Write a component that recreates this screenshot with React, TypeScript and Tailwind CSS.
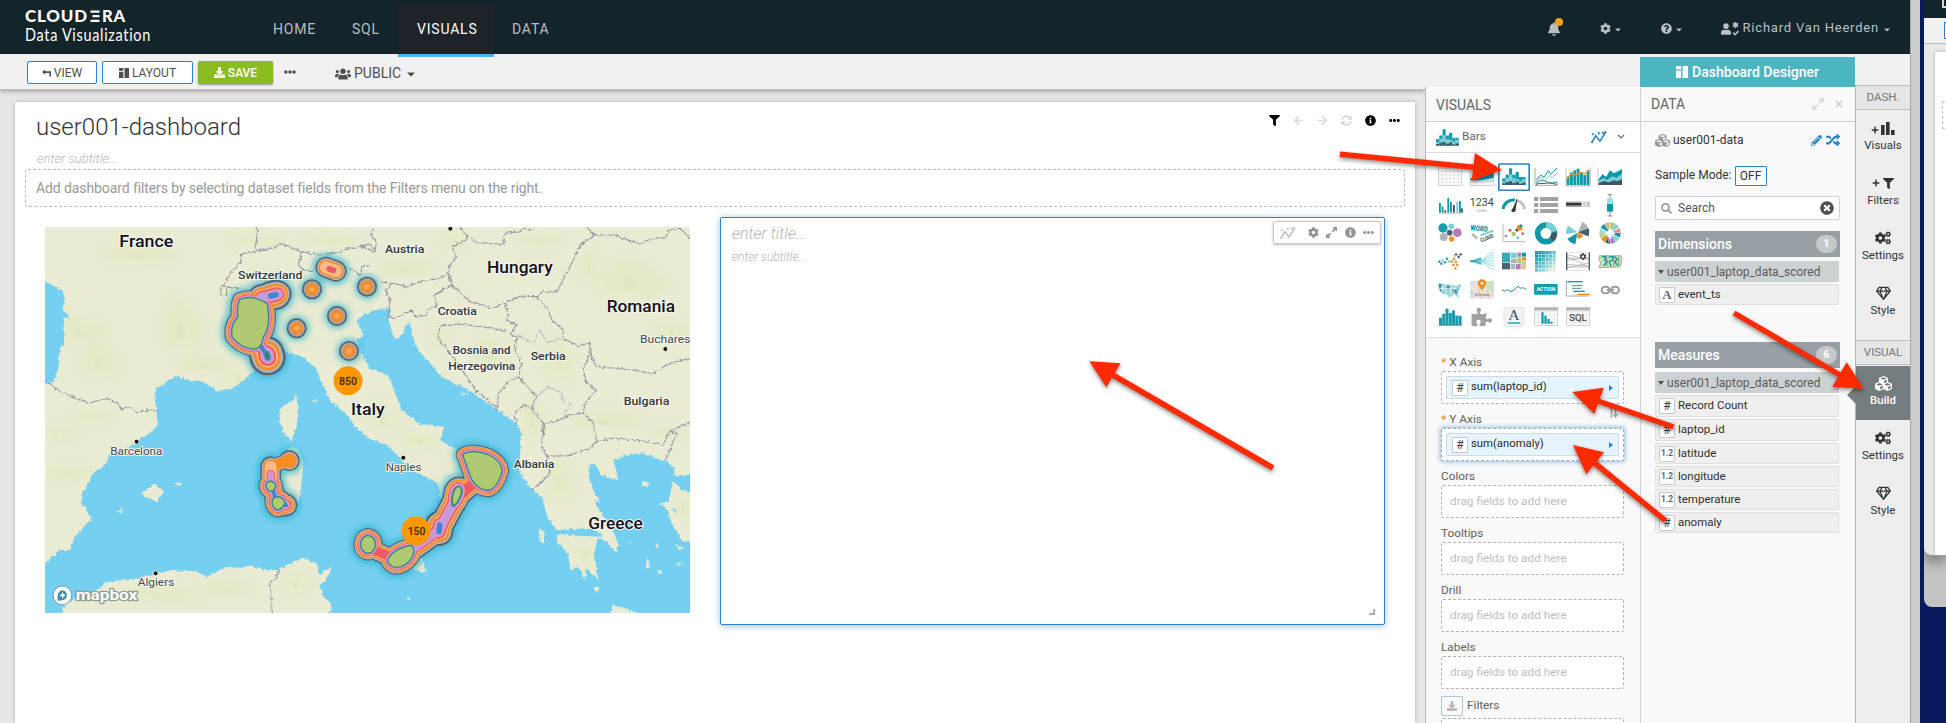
import React from "react";
import {
  FaArrowLeft,
  FaArrowRight,
  FaBell,
  FaCaretDown,
  FaCog,
  FaCogs,
  FaCubes,
  FaDownload,
  FaEllipsisH,
  FaFilter,
  FaInfoCircle,
  FaPencilAlt,
  FaPlus,
  FaPuzzlePiece,
  FaQuestionCircle,
  FaRandom,
  FaRegGem,
  FaSearch,
  FaSyncAlt,
  FaTimes,
  FaTimesCircle,
  FaUser,
  FaUsers,
} from "react-icons/fa";

const TEAL = "#0e98a8";
const LIGHT = "#7ccfda";
const SLATE = "#3f5663";
const GRAY = "#a3a3a3";

/* ---------- small icons ---------- */

function LayoutIcon({ className }: { className: string }) {
  return (
    <svg viewBox="0 0 12 12" className={className} fill="currentColor">
      <rect x="0" y="0" width="5.2" height="3.4" />
      <rect x="0" y="4.6" width="5.2" height="7.4" />
      <rect x="6.6" y="0" width="5.4" height="12" />
    </svg>
  );
}

function BackIcon() {
  return (
    <svg viewBox="0 0 10 8" className="h-2 w-[9px]" fill="currentColor">
      <path d="M3.6 0 0 3l3.6 3V4h4.6v3.8H10V2.1H3.6z" />
    </svg>
  );
}

function ExpandIcon({ className }: { className: string }) {
  return (
    <svg viewBox="0 0 14 14" className={className} fill="currentColor">
      <path d="M8.3 0H14v5.7L12 3.8 9 6.7 7.2 5l3-2.9zM5.7 14H0V8.3l2 1.9 3-2.9L6.8 9l-3 2.900z" />
    </svg>
  );
}

function TrendIcon({ className }: { className: string }) {
  return (
    <svg viewBox="0 0 50 42" className={className} fill="none" stroke="currentColor" strokeWidth="4">
      <path d="M3 37 15 17l13 17L45 7" strokeWidth="5" />
      <path d="M2 12h8M6 8v8M20 9h9M24.500 4v10M33 8h8M37 4v8" strokeWidth="3" />
      <circle cx="45" cy="6" r="3.500" fill="currentColor" stroke="none" />
      <circle cx="3.500" cy="37" r="3.500" fill="currentColor" stroke="none" />
    </svg>
  );
}

function StackedBars() {
  const top = [31, 20, 1, 20, 12, 27, 27];
  const mid = [40, 30, 19, 31, 33, 38, 33];
  const low = [46, 42, 40, 45, 41, 47, 44];
  return (
    <g>
      {top.map((t, i) => (
        <g key={i}>
          <rect x={i * 10} y={t} width="9.500" height={51 - t} fill={TEAL} />
          <rect x={i * 10} y={mid[i]} width="9.500" height={51 - mid[i]} fill={LIGHT} />
          <rect x={i * 10} y={low[i]} width="9.500" height={51 - low[i]} fill={SLATE} />
        </g>
      ))}
    </g>
  );
}

function GridLines({ h, head }: { h: number; head?: boolean }) {
  return (
    <g fill="none" stroke="#d9d9d9" strokeWidth="2">
      <rect x="14" y="15" width="69" height={h} fill="#fff" stroke="#bdbdbd" />
      {[25, 37, 48, 60, 72].map((x) => (
        <path key={x} d={`M${x} 15v${h}`} />
      ))}
      {[25, 36, 47, 58].map((y) => (
        <path key={y} d={`M14 ${y}h69`} />
      ))}
      {head && <rect x="13" y="13" width="71" height="9" fill="#b3b3b3" stroke="none" />}
    </g>
  );
}

function Cell({ children }: { children?: React.ReactNode }) {
  return (
    <svg viewBox="0 0 96 84" className="h-7 w-8">
      {children}
    </svg>
  );
}

function polar(cx: number, cy: number, r: number, deg: number) {
  const a = (deg * Math.PI) / 180;
  return `${(cx + r * Math.cos(a)).toFixed(1)} ${(cy + r * Math.sin(a)).toFixed(1)}`;
}

function wedge(cx: number, cy: number, r: number, a: number, b: number) {
  return `M${cx} ${cy}L${polar(cx, cy, r, a)}A${r} ${r} 0 ${b - a > 180 ? 1 : 0} 1 ${polar(cx, cy, r, b)}z`;
}

function VisualTypes() {
  const chord = ["#0e98a8", "#7ccfda", "#b57bbd", "#3f5663", "#f08a1d", "#a9c86f", "#9ed8e0", "#0e98a8", "#e2b36b", "#a9c86f", "#7ccfda", "#e58a85"];
  const heat = ["#0e98a8", "#2fa8b5", "#5fbfc9", "#8fd3d9", "#b8e4dd", "#dcefd5"];
  return (
    <div className="grid grid-cols-[repeat(6,32px)] pt-[10px] pl-2">
      <Cell>
        <GridLines h={53} />
      </Cell>
      <Cell>
        <GridLines h={53} />
        <path d="M14 45c15-2 20 3 35-3s20-6 34-14v18c-15 0-30 8-69 6z" fill={TEAL} />
        <rect x="14" y="50" width="69" height="6" fill={LIGHT} opacity=".6" />
      </Cell>
      <Cell>
        <rect x="2.500" y="3" width="91" height="79" rx="2" fill="#fff" stroke="#2a83c5" strokeWidth="5" />
        <g transform="translate(13 15)">
          <StackedBars />
        </g>
      </Cell>
      <Cell>
        <path d="M15 15v52h68" fill="none" stroke="#a9a9a9" strokeWidth="3" />
        <g fill="none" strokeWidth="3">
          <path d="M18 52 32 36l10 7 13-20 8 11 18-19" stroke={TEAL} />
          <path d="M18 58 30 44l14 8 14-15 9 7 15-15" stroke={LIGHT} />
          <path d="M18 61c14-12 24-9 35-3s18-1 30-1" stroke={TEAL} />
          <path d="M18 64c14-6 24 0 34-4s20 6 31 3" stroke={SLATE} />
        </g>
      </Cell>
      <Cell>
        {[41, 28, 22, 17, 30, 36, 22].map((t, i) => (
          <rect key={i} x={14 + i * 10} y={t} width="8.500" height={67 - t} fill={TEAL} />
        ))}
        <path d="M12 15v54h73V15" fill="none" stroke="#b9b9b9" strokeWidth="2.500" />
        <path d="M14 47 30 30l12 6 12-9 14 5 15-11" fill="none" stroke="#f5922a" strokeWidth="4" />
      </Cell>
      <Cell>
        <path d="M13 62V50l13-17 10 9 12-20 12 9 12-6 12-7v44z" fill={TEAL} />
        <path d="M13 62V54l15-9 12 6 14-11 14 4 16-12v30z" fill={LIGHT} />
        <path d="M13 66v-5l17-7 15 4 14-6 12 3 13-7v18z" fill={SLATE} />
        <path d="M12 15v54" stroke="#bbb" strokeWidth="2.500" />
      </Cell>

      <Cell>
        {[
          [15, 36, TEAL],
          [23, 46, TEAL],
          [31, 58, SLATE],
          [40, 21, TEAL],
          [48, 32, TEAL],
          [57, 42, SLATE],
          [67, 32, LIGHT],
          [75, 30, TEAL],
          [81, 52, SLATE],
        ].map(([x, y, c], i) => (
          <rect key={i} x={x} y={y} width="5.500" height={65 - Number(y)} fill={String(c)} />
        ))}
        <path d="M14 67h70" stroke="#aaa" strokeWidth="2" />
      </Cell>
      <Cell>
        <text x="11" y="44" fontSize="31" textLength="72" lengthAdjust="spacingAndGlyphs" fill="#444">
          1234
        </text>
        <text x="30" y="64" fontSize="12" textLength="36" fill="#aaa">
          LABEL
        </text>
      </Cell>
      <Cell>
        <path d="M15 54a32 32 0 0 1 36-27" fill="none" stroke={TEAL} strokeWidth="9" />
        <path d="M57 29a32 32 0 0 1 23 26" fill="none" stroke="#c4c4c4" strokeWidth="9" />
        <path d="M43 58 57 25l-6 35z" fill="#333" stroke="#333" strokeWidth="2" />
        <circle cx="46" cy="58" r="5.500" fill="#333" />
      </Cell>
      <Cell>
        {[18, 36, 54].map((y) => (
          <g key={y} fill={GRAY}>
            <rect x="12" y={y} width="13" height="12" />
            <rect x="30" y={y} width="54" height="12" />
          </g>
        ))}
      </Cell>
      <Cell>
        <rect x="12" y="32" width="72" height="16" fill="#c9c9c9" />
        <rect x="12" y="32" width="44" height="16" fill="#a5a5a5" />
        <rect x="12" y="36" width="46" height="7" fill="#333" />
        <path d="M62 33v14M72 33v14" stroke="#fff" strokeWidth="3" />
      </Cell>
      <Cell>
        <path d="M48 11v64M41 11h14M41 75h14" stroke="#777" strokeWidth="2.500" />
        <rect x="39" y="22" width="18" height="17" fill="#a5dce3" />
        <rect x="39" y="39" width="18" height="23" fill={TEAL} />
      </Cell>

      <Cell>
        <circle cx="27" cy="27" r="14" fill="#169cab" />
        <circle cx="52" cy="22" r="8.500" fill={LIGHT} />
        <circle cx="47" cy="41" r="8.500" fill="#4b606c" />
        <circle cx="70" cy="41" r="13" fill="#b57bbd" />
        <circle cx="29" cy="54" r="12" fill="#adb5b9" />
        <circle cx="53" cy="60" r="8" fill="#f5901e" />
      </Cell>
      <Cell>
        <path d="M18 45l16 14" stroke="#adb5b9" strokeWidth="7" />
        <path d="M44 49l38-14" stroke={LIGHT} strokeWidth="6" />
        <g fontWeight="900">
          <text transform="translate(13 34) rotate(5)" fill={TEAL} textLength="52" lengthAdjust="spacingAndGlyphs" fontSize="23">
            WORD
          </text>
          <text transform="translate(46 70) rotate(-22)" fill={SLATE} textLength="40" lengthAdjust="spacingAndGlyphs" fontSize="17">
            CLOUD
          </text>
        </g>
      </Cell>
      <Cell>
        <path d="M15 15v53h68" fill="none" stroke="#aaa" strokeWidth="2.500" />
        <circle cx="36" cy="34" r="4.500" fill="#e9535a" />
        <circle cx="24" cy="51" r="4" fill="#b57bbd" />
        <circle cx="47" cy="45" r="7" fill="#a9c86f" />
        <circle cx="57" cy="33" r="5" fill="#3f5663" />
        <circle cx="65" cy="26" r="8.500" fill="#f08a1d" />
        <circle cx="69" cy="20" r="4.500" fill={TEAL} />
        <circle cx="74" cy="44" r="4" fill="#e9535a" />
        <circle cx="59" cy="56" r="3" fill={TEAL} />
      </Cell>
      <Cell>
        <circle cx="48" cy="43" r="25" fill="none" stroke="#0e98a8" strokeWidth="17" />
        <path d="M48 18A25 25 0 0 1 72 38" fill="none" stroke={LIGHT} strokeWidth="17" />
        <path d="M73 41a25 25 0 0 1-8 20" fill="none" stroke={SLATE} strokeWidth="17" />
      </Cell>
      <Cell>
        <path d={wedge(48, 40, 34, -68, -25)} fill="#adb5b9" />
        <path d={wedge(48, 40, 34, -22, 22)} fill="#4b606c" />
        <path d={wedge(48, 40, 18, 28, 100)} fill="#f08a1d" />
        <path d={wedge(46, 42, 34, 100, 150)} fill={TEAL} />
        <path d={wedge(46, 40, 34, 172, 216)} fill={LIGHT} />
      </Cell>
      <Cell>
        {chord.map((c, i) => (
          <path key={i} d={wedge(48, 42, 32, i * 30, i * 30 + 27)} fill={c} />
        ))}
        <path d="M48 26 56 36 64 44 54 50 48 62 40 50 32 42 42 36z" fill="#fff" />
        <path d="M48 14 44 70M22 30 74 56M20 52 74 28" stroke="#fff" strokeWidth="2" />
      </Cell>

      <Cell>
        <path d="M16 44 32 46 40 36 44 44 58 42 60 54 66 62M58 42 66 24 80 26" stroke="#ccc" strokeWidth="2" fill="none" />
        {[
          [16, 44, TEAL], [22, 50, TEAL], [26, 40, LIGHT], [33, 46, TEAL], [39, 35, TEAL], [44, 43, LIGHT], [52, 44, "#f08a1d"], [60, 36, "#f08a1d"],
          [58, 54, "#f08a1d"], [66, 45, "#f08a1d"], [64, 64, "#f08a1d"], [70, 54, "#e58a4a"], [66, 22, SLATE], [74, 30, SLATE], [80, 22, SLATE], [62, 26, "#b9c2c6"],
        ].map(([x, y, c], i) => (
          <circle key={i} cx={x} cy={y} r="3.600" fill={String(c)} />
        ))}
      </Cell>
      <Cell>
        <path d="M12 42 46 30v24z" fill="#57bcc8" />
        <path d="M12 43h16" stroke={TEAL} strokeWidth="4" />
        {[16, 24, 32, 40, 48, 56, 66].map((y) => (
          <path key={y} d={`M38 42C56 42 62 ${y} 84 ${y}`} fill="none" stroke="#8ed2db" strokeWidth="2.500" />
        ))}
      </Cell>
      <Cell>
        <rect x="12" y="17" width="24" height="28" fill="#37a9b7" />
        <rect x="12" y="47" width="24" height="20" fill="#4b606c" />
        <rect x="38" y="17" width="18" height="16" fill={LIGHT} />
        <rect x="38" y="35" width="18" height="14" fill="#adb5b9" />
        <rect x="38" y="51" width="14" height="16" fill="#adb5b9" />
        <rect x="58" y="17" width="12" height="12" fill="#b57bbd" />
        <rect x="72" y="17" width="12" height="12" fill={TEAL} />
        <rect x="58" y="31" width="12" height="18" fill="#a9c86f" />
        <rect x="72" y="31" width="12" height="10" fill="#f08a1d" />
        <rect x="54" y="51" width="14" height="16" fill="#b57bbd" />
        <rect x="70" y="43" width="14" height="24" fill="#d9c79a" />
      </Cell>
      <Cell>
        {Array.from({ length: 36 }, (_, i) => (
          <rect key={i} x={15 + (i % 6) * 10.5} y={12 + Math.floor(i / 6) * 10.5} width="9.500" height="9.500" fill={heat[Math.min(5, Math.floor(((i % 6) + Math.floor(i / 6)) / 1.8))]} />
        ))}
      </Cell>
      <Cell>
        <path d="M14 22 82 40M14 28 82 60M14 40 82 32M14 52 82 58M14 62 82 48M14 34h68M14 60h68" stroke="#b5b5b5" strokeWidth="2.500" />
        <path d="M14 16v54M82 16v54" stroke={SLATE} strokeWidth="4" />
        <path d="M14 16h68M14 70h68" stroke="#d0d0d0" strokeWidth="2" />
        <g transform="translate(52 18)" color="#4b4b4b">
          <circle cx="11" cy="11" r="12" fill="#fff" />
          <FaCog size={22} />
        </g>
      </Cell>
      <Cell>
        <path d="M16 26h66l2 10-5 24-64 2 5-14-5-10z" fill="#c9dfb5" stroke="#8a8f7e" strokeWidth="2" />
        <path d="M24 30l12-2-4 12 8 4-12 12M44 30l14-1-4 12-10 2M62 28l8 10-8 6 10 12M46 46l6 12" fill="none" stroke={TEAL} strokeWidth="4" />
        <path d="M38 30v28M60 30v28M74 30v26" stroke="#5b7f6e" strokeWidth="2" />
      </Cell>

      <Cell>
        <path d="M13 25 36 28 58 29 66 34 80 26 82 34 75 44 72 58 76 70 70 66 62 58 50 64 48 70 40 60 24 56 15 44z" fill="#9bd4da" />
        <path d="M14 26l10 2-4 14 8 12-10-6zM36 32h12v10H36zM54 42l12 2 4 12-12-4zM66 38l8 2-4 8z" fill="#2b8f9d" />
        <path d="M24 30v24M36 28v30M50 30v30M60 32v26M16 40h58" stroke="#fff" strokeWidth="2" />
      </Cell>
      <Cell>
        <rect x="13" y="18" width="70" height="52" fill="#c9dff0" />
        <path d="M13 30 30 18H83V70H24z" fill="#e6e3d8" />
        <path d="M54 18H83V52L64 46z" fill="#cfe3c2" />
        <path d="M13 52l20 6 50 2M34 18l10 52M62 44l8 26" stroke="#f4b9b0" strokeWidth="2.500" fill="none" />
        <path d="M48 48C42 36 36 32 36 25a12 12 0 0 1 24 0c0 7-6 11-12 23z" fill="#f28a1d" />
        <circle cx="48" cy="25" r="4.500" fill="#fff" />
        <text x="26" y="62" fontSize="9" textLength="44" lengthAdjust="spacingAndGlyphs" fill="#666">
          San Francisco
        </text>
      </Cell>
      <Cell>
        <path d="M13 45 20 48 28 44 38 50 48 46 54 38 62 34 68 40 76 38 82 42" fill="none" stroke={TEAL} strokeWidth="3" />
        <circle cx="82" cy="42" r="3" fill="#a9c86f" />
        <circle cx="14" cy="45" r="2.500" fill="#f08a1d" />
      </Cell>
      <Cell>
        <rect x="12" y="27" width="71" height="32" rx="3" fill="#169cab" />
        <text x="20" y="49" fontSize="15" fontWeight="700" textLength="56" fill="#fff">
          ACTION
        </text>
      </Cell>
      <Cell>
        <path d="M13 15v48h70" fill="none" stroke="#aaa" strokeWidth="3" />
        <path d="M16 20h46" stroke={TEAL} strokeWidth="4" />
        <path d="M30 32h32M30 40h28" stroke="#6d7f88" strokeWidth="3" />
        <path d="M34 49h34" stroke={TEAL} strokeWidth="4" />
        <path d="M46 58h37" stroke="#f08a1d" strokeWidth="4" />
      </Cell>
      <Cell>
        <g transform="translate(20 17)" fill="none" stroke="#9b9b9b" strokeWidth="6">
          <rect x="3" y="18" width="24" height="20" rx="10" />
          <rect x="31" y="18" width="24" height="20" rx="10" />
          <path d="M18 28h22" />
        </g>
      </Cell>

      <Cell>
        {[44, 32, 17, 30, 22, 38, 38].map((t, i) => (
          <rect key={i} x={15 + i * 9.8} y={t} width="9" height={66 - t} fill="#169cab" />
        ))}
        <path d="M14 67h70" stroke={SLATE} strokeWidth="2" />
      </Cell>
      <Cell>
        <g transform="translate(16 11)" color="#a0a0a0">
          <FaPuzzlePiece size={62} />
        </g>
      </Cell>
      <Cell>
        <rect x="18" y="14" width="60" height="56" rx="5" fill="#f3f3f3" stroke="#ddd" strokeWidth="2.500" />
        <text x="31" y="52" fontSize="44" textLength="34" lengthAdjust="spacingAndGlyphs" fill="#44545e" fontFamily="Liberation Serif, serif">
          A
        </text>
        <path d="M29 60h38" stroke="#37b1be" strokeWidth="5" />
      </Cell>
      <Cell>
        <GridLines h={53} head />
        <path d="M34 28h7v34h-7zM43 38h7v24h-7zM52 48h7v14h-7zM61 56h7v6h-7z" fill="#169cab" />
      </Cell>
      <Cell>
        <GridLines h={53} head />
        <text x="22" y="54" fontSize="25" textLength="52" lengthAdjust="spacingAndGlyphs" fill="#444" stroke="#444" strokeWidth=".6">
          SQL
        </text>
      </Cell>
    </div>
  );
}

/* ---------- map ---------- */

type Blob = { d: string; k: number; from: number; fill?: boolean };

const RINGS: [number, string][] = [
  [36, "#536678"],
  [31, "#b3b1b3"],
  [26, "#f98d22"],
  [20.5, "#f9b98a"],
  [17.5, "#ee5a62"],
  [13.5, "#ef8f9d"],
  [11, "#c59adb"],
  [6.5, "#3f86cf"],
  [3, "#328a35"],
];

const BLOBS: Blob[] = [
  { d: "M600 240Q640 225 680 252Q692 320 668 350Q664 385 640 386Q600 380 578 350Q572 315 596 292Q592 260 600 240z", k: 0.66, from: 9, fill: true },
  { d: "M664 232L715 222", k: 1.1, from: 7 },
  { d: "M692 228L708 224", k: 1.25, from: 8 },
  { d: "M660 375L680 404", k: 0.95, from: 8 },
  { d: "M680 402L683 412", k: 1.5, from: 9 },
  { d: "M858 142L888 153", k: 0.88, from: 4 },
  { d: "M868 147L880 151", k: 0.5, from: 5 },
  { d: "M692 785Q706 790 705 800Q700 812 690 812Q678 805 680 793Q684 785 692 785z", k: 0.68, from: 9, fill: true },
  { d: "M702 835Q722 826 733 846Q728 866 712 868Q698 860 698 846z", k: 0.68, from: 9, fill: true },
  { d: "M695 800L712 850", k: 0.9, from: 8 },
  { d: "M715 855L738 855", k: 0.95, from: 8 },
  { d: "M692 740L692 790", k: 0.86, from: 4 },
  { d: "M692 762L692 790", k: 0.7, from: 7 },
  { d: "M694 738L747 722", k: 0.6, from: 3 },
  { d: "M747 722L748 722", k: 0.86, from: 3 },
  { d: "M1270 704Q1296 688 1345 706Q1384 726 1385 752Q1374 796 1350 808Q1318 814 1295 775Q1285 745 1270 704z", k: 0.62, from: 9, fill: true },
  { d: "M1258 802Q1266 808 1260 826Q1250 850 1240 856Q1236 836 1244 812Q1250 802 1258 802z", k: 0.9, from: 9, fill: true },
  { d: "M1255 830L1310 780", k: 0.9, from: 5 },
  { d: "M1240 850L1200 925", k: 1.05, from: 7 },
  { d: "M1199 915L1197 935", k: 1.2, from: 8 },
  { d: "M1197 930L1100 1000", k: 1, from: 7 },
  { d: "M1045 1020Q1058 990 1112 978Q1124 984 1116 1010Q1094 1042 1064 1040Q1046 1034 1045 1020z", k: 0.66, from: 9, fill: true },
  { d: "M983 948Q1006 952 1004 976Q1000 998 983 998Q964 994 964 972Q966 952 983 948z", k: 0.66, from: 9, fill: true },
  { d: "M990 985L1060 1015", k: 0.8, from: 5 },
];

const SPOTS = [
  [816, 208],
  [770, 325],
  [891, 288],
  [927, 393],
  [981, 200],
];

type Label = [string, number, number, number, number, boolean];
const LABELS: Label[] = [
  ["France", 238, 400, 82, 50, true],
  ["Switzerland", 594, 787, 176, 34, true],
  ["Austria", 1035, 1153, 98, 34, true],
  ["Hungary", 1341, 1538, 158, 50, true],
  ["Croatia", 1193, 1310, 286, 34, true],
  ["Romania", 1700, 1905, 275, 50, true],
  ["Bosnia and", 1238, 1412, 403, 34, true],
  ["Herzegovina", 1225, 1426, 449, 34, true],
  ["Serbia", 1472, 1577, 420, 34, true],
  ["Bulgaria", 1751, 1888, 554, 34, true],
  ["Italy", 933, 1034, 585, 50, true],
  ["Albania", 1421, 1543, 743, 34, true],
  ["Greece", 1645, 1808, 926, 50, true],
  ["Bucharest", 1800, 1963, 370, 34, false],
  ["Naples", 1037, 1144, 753, 34, false],
  ["Barcelona", 211, 367, 704, 34, false],
  ["Algiers", 293, 403, 1098, 34, false],
];

const HILLS = [
  [120, 330, 90, 40], [430, 320, 70, 90], [500, 430, 90, 30], [600, 470, 40, 25], [180, 420, 60, 60], [50, 640, 60, 25], [160, 590, 60, 20], [90, 760, 70, 25],
  [360, 1120, 120, 30], [560, 1100, 80, 30], [770, 1090, 40, 40], [650, 60, 80, 20], [880, 60, 90, 20], [1100, 140, 90, 30], [1250, 60, 40, 30], [1500, 60, 70, 20],
  [1650, 140, 30, 60], [1780, 180, 110, 70], [1900, 330, 60, 30], [1560, 420, 50, 80], [1350, 400, 60, 50], [1480, 600, 40, 60], [1700, 600, 120, 30], [1890, 640, 50, 20],
  [1030, 590, 40, 50], [1140, 660, 50, 30], [1560, 780, 40, 70], [1640, 1000, 40, 30], [300, 100, 120, 40], [740, 590, 20, 50], [1930, 860, 30, 40], [1200, 350, 30, 40],
];

const BORDERS = [
  "M652 21l-2 40-5 24 15 5-40 10-15 0-5 30-30 30-15 30-15 20 5 18 15-3 0-25 35 8",
  "M660 90l40-5 20-15 50 18 15 7-10 40 15 15 30 2",
  "M785 95l55 10 40-5 20-5 30-10 60-10 15 15",
  "M930 145l20 12 10 10 5-25 20-8",
  "M25 487l35 28 50 20 40 13 50-13 35 15 10 20 20-10 25 18 30-8 35 2",
  "M718 1045l-13 35-15 5 3 45 4 49",
  "M1005 21L992 45 1010 65 1005 95 960 75",
  "M1260 21L1280 45 1280 60 1235 80 1250 110 1230 135 1225 160",
  "M1280 45L1310 68 1390 73 1395 40 1440 35 1450 25 1480 30",
  "M1640 21L1665 45 1620 75 1600 120 1580 160 1550 215 1510 215 1490 230 1440 228 1395 250",
  "M1665 45L1720 45 1803 73 1830 58 1880 50 1885 30 1920 25 1950 55",
  "M1020 187L1060 190 1100 200 1140 185 1200 175 1225 160",
  "M1060 190L1035 210 1050 240 1045 290 1070 293 1115 270 1125 290 1160 285 1165 265 1190 260 1182 225 1235 195 1225 160",
  "M1235 195L1290 245 1360 265 1395 250",
  "M1395 250L1405 285 1400 300 1430 315 1410 345 1430 350 1425 390 1445 430 1435 470",
  "M1405 335L1360 325 1260 312 1200 318 1192 355 1220 385 1270 455 1310 515 1370 560",
  "M1490 230L1525 270 1535 300 1570 330 1570 355 1615 378 1650 370 1650 400 1670 440 1780 450 1835 462 1890 430 1950 415",
  "M1650 400L1630 450 1640 490 1670 510 1635 550 1630 580 1590 585 1560 600 1515 610 1508 650",
  "M1435 470L1490 530 1475 565 1450 555 1425 580 1430 615",
  "M1435 470L1400 490 1375 520 1370 570",
  "M1475 565L1510 610 1505 680 1520 708 1580 708 1650 685 1670 665 1660 610 1630 580",
  "M1670 665L1720 655 1790 660 1870 675 1885 635 1950 605",
  "M1885 635L1910 640 1890 690 1875 720",
  "M1520 708L1530 760 1500 790 1475 812",
];

function MapVisual() {
  return (
    <svg viewBox="15 21 1935 1158" className="h-[386px] w-[645px]" preserveAspectRatio="none">
      <defs>
        <filter id="rough" x="0" y="0" width="1" height="1">
          <feTurbulence type="fractalNoise" baseFrequency="0.1" numOctaves="2" seed="4" />
          <feDisplacementMap in="SourceGraphic" scale="14" xChannelSelector="R" yChannelSelector="G" />
        </filter>
        <filter id="soft" x="-20%" y="-20%" width="140%" height="140%">
          <feGaussianBlur stdDeviation="10" />
        </filter>
        <filter id="hill" x="-20%" y="-20%" width="140%" height="140%">
          <feGaussianBlur stdDeviation="10" />
        </filter>
        <clipPath id="frame">
          <rect x="15" y="21" width="1935" height="1158" />
        </clipPath>
      </defs>
      <g clipPath="url(#frame)">
        <rect x="15" y="21" width="1935" height="1158" fill="#e9ebd2" />
        <g filter="url(#hill)" fill="#e4eac6">
          {HILLS.map(([x, y, w, h], i) => (
            <path key={i} d={`M${x - w} ${y}l${w * 0.7} ${-h}l${w * 0.6} ${h * 0.3}l${w * 0.7} ${h * 0.9}l${-w * 0.6} ${h * 0.7}l${-w * 0.5} ${-h * 0.4}l${-w * 0.5} ${h * 0.2}z`} />
          ))}
        </g>
        <g fill="#dde3bc" opacity=".45">
          {HILLS.map(([x, y, w, h], i) => (
            <path key={i} d={`M${x - w * 0.3} ${y + 6}l${w * 0.25} ${-h * 0.4}l${w * 0.12} ${h * 0.5}l${w * 0.1} ${h * 0.2}l${-w * 0.3} ${h * 0.1}z`} />
          ))}
        </g>
        <g filter="url(#rough)">
          <g fill="#75cff0">
            <path d="M-20 165L45 200 70 215 73 245 68 270 92 298 72 292 72 370 60 390 55 440 45 480 25 490-20 487z" />
            <path d="M-20 1080L30 1015 60 990 90 990 105 950 155 893 125 850 125 825 165 755 190 740 210 705 260 685 290 665 330 640 355 615 350 570 345 510 385 480 415 468 440 480 490 485 530 512 580 505 640 455 690 430 730 395 780 405 825 440 840 480 870 540 920 585 950 625 985 655 1050 680 1070 705 1120 750 1160 775 1195 790 1200 830 1215 870 1190 935 1215 945 1240 910 1262 860 1275 800 1300 790 1340 815 1350 800 1320 735 1250 690 1200 660 1212 620 1140 612 1085 570 1070 530 1045 465 990 448 965 400 950 360 970 345 950 305 970 285 1020 265 1055 268 1045 300 1065 358 1090 345 1098 312 1110 310 1118 350 1135 390 1205 470 1290 512 1380 575 1430 610 1445 640 1437 750 1460 790 1510 840 1522 890 1550 930 1650 925 1690 945 1690 950 1550 945 1552 970 1585 1000 1590 1050 1615 1040 1635 1080 1640 1045 1675 1080 1662 1000 1672 955 1735 978 1722 940 1700 905 1660 840 1680 850 1648 780 1645 740 1665 730 1680 765 1735 780 1720 720 1760 705 1810 700 1875 722 1905 745 1890 825 1885 840 1912 880 1880 860 1890 900 1925 960 1990 985 1990 1220 860 1220 875 1150 850 1130 838 1100 870 1060 875 1038 838 1065 830 1030 790 1013 760 1025 715 1050 670 1050 630 1035 600 1045 560 1040 500 1070 470 1055 400 1050 350 1060 300 1075 200 1085 170 1110 75 1150 50 1220-20 1220z" />
            <path d="M1885 770l100-10v60l-60-10z" />
          </g>
          <g fill="#e9ebd2">
            <path d="M720 565L745 550 762 542 768 518 775 570 770 620 755 662 732 640 718 600z" />
            <path d="M690 720L760 680 775 690 790 730 785 800 775 850 700 880 670 850 680 760z" />
            <path d="M305 820L345 793 370 815 350 845 320 835zM398 786l28 4v10l-14-4zM228 878l16-12 2 10z" />
            <path d="M965 955L1020 985 1110 965 1150 955 1145 1010 1160 1060 1110 1045 1010 1010z" />
            <path d="M1710 1190L1715 1155 1750 1165 1810 1185z" />
            <path d="M1860 850l30-8 15 16-18 14zM1805 785h22v14h-20zM1495 925l22 14-6 34-12-10zM1700 960l35 15-5 20-20-14zM1820 1010l12 30-14 8zM1850 1050h16v10h-16zM1910 975l20 10-14 6zM1100 1132h10v8h-10zM1665 1100h10v14h-10zM1905 1035l30-14-16 16zM1770 960l6 10-6 6zM1850 965l4 16h-6zM815 540l16-2v6zM1235 480l30 12-20 6zM1250 520h34v6z" />
          </g>
          <g fill="none" stroke="#9496a6" strokeWidth="3.200" strokeLinejoin="round">
            {BORDERS.map((d) => (
              <path key={d} d={d} />
            ))}
            <path d="M1570 355L1520 368 1500 330 1480 368 1430 345M1490 530L1525 500 1565 520 1570 545 1592 550 1570 590" stroke="#bdbbc6" />
          </g>
        </g>

        <g filter="url(#soft)" stroke="#2db3cf" fill="none" strokeLinecap="round" strokeLinejoin="round" opacity=".8">
          {BLOBS.map((b) => (
            <path key={b.d} d={b.d} strokeWidth={2 * 35 * b.k + 18} />
          ))}
          {SPOTS.map(([x, y]) => (
            <circle key={x} cx={x} cy={y} r="36" fill="#2db3cf" stroke="none" />
          ))}
        </g>
        {RINGS.map(([w, color], i) => (
          <g key={color} stroke={color} fill="none" strokeLinecap="round" strokeLinejoin="round">
            {BLOBS.filter((b) => i < b.from).map((b) => (
              <path key={b.d} d={b.d} strokeWidth={2 * w * b.k} />
            ))}
          </g>
        ))}
        {BLOBS.filter((b) => b.fill).map((b) => (
          <path key={b.d} d={b.d} fill="#b0ca74" />
        ))}
        {SPOTS.map(([x, y]) => (
          <g key={x}>
            <circle cx={x} cy={y} r="30" fill="#536678" />
            <circle cx={x} cy={y} r="25" fill="#a9a5a5" />
            <circle cx={x} cy={y} r="19" fill="#f58c2a" />
            <circle cx={x} cy={y} r="8" fill="#f7a75f" />
          </g>
        ))}

        {[[1231, 26], [1876, 387], [1090, 713], [290, 665], [347, 1060]].map(([x, y]) => (
          <circle key={x} cx={x} cy={y} r="7.500" fill="#111" stroke="#f5f5ea" strokeWidth="3" />
        ))}
        {LABELS.map(([t, x0, x1, y, size, strong]) => (
          <text
            key={t}
            x={x0}
            y={y}
            fontSize={size}
            textLength={x1 - x0}
            lengthAdjust="spacingAndGlyphs"
            fontWeight={strong ? 500 : 400}
            fill={size > 40 ? "#10101c" : strong ? "#33343f" : "#484950"}
            stroke="#f6f6ec"
            strokeWidth="6"
            strokeLinejoin="round"
            paintOrder="stroke"
          >
            {t}
          </text>
        ))}
        <circle cx="924" cy="482" r="43.500" fill="#ff9800" />
        <circle cx="1128" cy="932" r="43.500" fill="#ff9800" />
        <g fontSize="34" fontWeight="500" fill="#4a3a1c" stroke="#4a3a1c" strokeWidth=".8">
          <text x="897" y="495" textLength="54" lengthAdjust="spacingAndGlyphs">850</text>
          <text x="1103" y="945" textLength="53" lengthAdjust="spacingAndGlyphs">150</text>
        </g>
        <circle cx="67" cy="1126" r="28" fill="#fff" stroke="#7d9aa0" strokeWidth="3" />
        <path d="M53 1142c-2-20 2-30 15-31a15 15 0 1 1-4 30q-6 2-11 1z" fill="#4b8fa5" />
        <path d="M68 1116l3 7 7 3-7 3-3 7-3-7-7-3 7-3z" fill="#fff" />
        <text x="107" y="1139" fontSize="42" fontWeight="700" textLength="185" lengthAdjust="spacingAndGlyphs" fill="#fff" stroke="#8f9d90" strokeWidth="7" paintOrder="stroke" strokeLinejoin="round">
          mapbox
        </text>
      </g>
    </svg>
  );
}

/* ---------- annotation arrows ---------- */

function Arrows() {
  const arrows = [
    { a: [1340, 154.3], b: [1474, 167.3], head: "1502,170 1475,153 1471.700,180.700" },
    { a: [1273, 468], b: [1112, 374.5], head: "1089.400,361.300 1120.600,363.300 1106.300,387.300" },
    { a: [1734, 313], b: [1840, 375], head: "1864,389 1846.700,362.300 1832.300,386.700" },
    { a: [1673.5, 427], b: [1598, 401], head: "1572.300,392 1603.700,387.700 1594.300,414" },
    { a: [1665.5, 520.7], b: [1594, 462.5], head: "1573,445 1604,452.300 1586.300,474.300" },
  ];
  return (
    <svg viewBox="0 0 1946 723" className="pointer-events-none absolute inset-0 z-20 h-[723px] w-[1946px] drop-shadow-[0_2px_2px_rgba(0,0,0,0.45)]">
      {arrows.map((r) => (
        <g key={r.head} fill="#ff2a00" stroke="#ff2a00">
          <line x1={r.a[0]} y1={r.a[1]} x2={r.b[0]} y2={r.b[1]} strokeWidth="5.500" />
          <polygon points={r.head} stroke="none" />
        </g>
      ))}
    </svg>
  );
}

/* ---------- header and toolbar ---------- */

function Header() {
  return (
    <header className="relative z-10 flex h-[54px] shrink-0 bg-[#14242b] text-[14px] tracking-[0.8px] text-[#b9bfc2]">
      <div className="flex w-[253px] flex-col pt-[6px] pl-[25px] text-white">
        <svg viewBox="0 -3 110 20" className="h-5 w-[110px] overflow-visible" fill="#fff" fontWeight="900" fontSize="16" fontFamily="Lato, sans-serif">
          <text x="0" y="13" textLength="63" lengthAdjust="spacingAndGlyphs">
            CLOUD
          </text>
          <path d="M65.500 1.500h9v2.200h-9zM67.500 6.100h7v2.100h-7zM65.500 10.800h9V13h-9z" />
          <text x="77" y="13" textLength="24" lengthAdjust="spacingAndGlyphs">
            RA
          </text>
        </svg>
        <svg viewBox="0 0 136 24" className="-mt-1 h-6 w-[136px] overflow-visible" fill="#fff">
          <text x="0" y="19" fontSize="17" textLength="126" lengthAdjust="spacingAndGlyphs" fontFamily="Lato, sans-serif">
            Data Visualization
          </text>
        </svg>
      </div>
      <nav className="flex leading-[50px]">
        <span className="w-20 pt-1 pl-5">HOME</span>
        <span className="w-[65px] pt-1 pl-[19px]">SQL</span>
        <span className="mt-[3px] h-[54px] w-24 border-b-[3px] border-[#4bb2f9] bg-[#1e2329] pt-px pl-[19px] text-white">VISUALS</span>
        <span className="pt-1 pl-[18px]">DATA</span>
      </nav>
      <div className="ml-auto flex items-center pt-[3px] pr-[18px]">
        <span className="relative mr-10 flex">
          <FaBell className="h-3.5 w-3" />
          <span className="absolute -top-1 left-[7px] size-2 rounded-full bg-[#f9a11f]" />
        </span>
        <FaCog className="size-[11px]" />
        <FaCaretDown className="mr-[38px] ml-0.5 size-2.5 pt-px" />
        <FaQuestionCircle className="size-[11px]" />
        <FaCaretDown className="mr-[37px] ml-0.5 size-2.5 pt-px" />
        <FaUser className="h-3 w-[10px]" />
        <span className="mr-1 flex w-2 flex-col items-center">
          <svg viewBox="0 0 8 14" className="h-3.5 w-2" fill="none" stroke="currentColor" strokeWidth="1.600">
            <path d="M4.500 0v6M1.900 1.500l5.200 3M7.100 1.500l-5.200 3M2 10.500l2 2 3.500-3.500" />
          </svg>
        </span>
        <span className="pb-0.5 text-[13px]">Richard Van Heerden</span>
        <FaCaretDown className="ml-[3px] size-2.5 pt-px" />
      </div>
    </header>
  );
}

function Toolbar() {
  return (
    <div className="relative flex h-9 shrink-0 border-b border-[#bdbdbd] bg-[#f1f1f1] pt-[7px] pl-[27px] text-[12px] text-[#4f4f4f] shadow-[0_2px_4px_rgba(0,0,0,0.25)]">
      <div className="flex h-[23px] gap-[5px] leading-none">
        <button className="flex w-[70px] items-center justify-center gap-[3px] rounded-[2px] border border-[#2a84c6] bg-white">
          <BackIcon />
          VIEW
        </button>
        <button className="flex w-[91px] items-center justify-center gap-[3px] rounded-[2px] border border-[#2a84c6] bg-white">
          <LayoutIcon className="size-2.5" />
          LAYOUT
        </button>
        <button className="flex w-[75px] items-center justify-center gap-[3px] rounded-[2px] bg-[#8abc1f] font-medium text-white shadow-[0_1px_2px_rgba(0,0,0,0.4)]">
          <FaDownload className="size-[11px]" />
          SAVE
        </button>
      </div>
      <FaEllipsisH className="mt-[5px] ml-[11px] size-3" />
      <div className="ml-[39px] flex h-[23px] items-center pt-0.5 text-[14px]">
        <FaUsers className="size-4" />
        <span className="ml-[3px]">PUBLIC</span>
        <FaCaretDown className="ml-1 size-3" />
      </div>
    </div>
  );
}

/* ---------- dashboard canvas ---------- */

function Canvas() {
  return (
    <main className="flex grow bg-[#e7e7e7] pt-3 pr-[10px] pl-[15px]">
      <div className="w-[1400px] bg-white pl-[10px] shadow-[0_0_4px_rgba(0,0,0,0.25)]">
        <div className="flex h-[46px] items-start justify-between pr-[15px] pl-[11px]">
          <h1 className="pt-[7px] text-[24px] leading-9 font-light text-[#333]">user001-dashboard</h1>
          <div className="flex items-center gap-[13px] pt-[13px] text-black">
            <FaFilter className="size-[11px]" />
            <FaArrowLeft className="size-[11px] text-[#d9d9d9]" />
            <FaArrowRight className="size-[11px] text-[#d9d9d9]" />
            <FaSyncAlt className="size-[11px] text-[#d9d9d9]" />
            <FaInfoCircle className="size-[11px]" />
            <FaEllipsisH className="size-[11px]" />
          </div>
        </div>
        <div className="h-[21px] pl-3 text-[13px] leading-[21px] font-light text-[#b5b5b5] italic">enter subtitle...</div>
        <div className="h-[38px] w-[1380px] rounded-[3px] border border-dashed border-[#b9b9b9] pl-[10px] text-[14px] leading-9 tracking-[-0.1px] text-[#999]">
          Add dashboard filters by selecting dataset fields from the Filters menu on the right.
        </div>
        <div className="flex">
          <div className="mt-5 ml-5">
            <MapVisual />
          </div>
          <section className="mt-[10px] ml-[30px] h-[408px] w-[665px] rounded-[2px] border border-[#2a84c6] pt-[3px] pl-[11px] shadow-[0_1px_6px_rgba(42,132,198,0.5)]">
            <div className="flex justify-between pr-[3px]">
              <div className="font-light text-[#b5b5b5] italic">
                <div className="h-6 text-[16px] leading-[25px]">enter title...</div>
                <div className="h-[22px] text-[12px] leading-[24px]">enter subtitle...</div>
              </div>
              <div className="flex h-[23px] w-[108px] items-center justify-between rounded-[2px] border border-[#c9c9c9] px-1.5 text-[#949494] shadow-[0_1px_3px_rgba(0,0,0,0.25)]">
                <TrendIcon className="mr-1 h-3.5 w-4 text-[#c2c2c2]" />
                <FaCog className="size-[11px]" />
                <ExpandIcon className="size-[11px]" />
                <FaInfoCircle className="size-[11px]" />
                <FaEllipsisH className="size-[11px]" />
              </div>
            </div>
            <div className="mt-[342px] ml-[637px] size-[6px] border-r-2 border-b-2 border-[#b0b0b0]" />
          </section>
        </div>
      </div>
    </main>
  );
}

/* ---------- visuals panel ---------- */

function TypeBadge({ kind }: { kind: string }) {
  if (kind === "A") {
    return <span className="flex size-4 shrink-0 items-center justify-center rounded-[1px] border border-[#c9c9c9] bg-white font-['Liberation_Serif',serif] text-[13px] leading-none font-bold text-[#666]">A</span>;
  }
  if (kind === "#") {
    return <span className="flex size-4 shrink-0 items-center justify-center rounded-[1px] border border-[#c9c9c9] bg-white text-[12px] leading-none text-[#444]">#</span>;
  }
  return <span className="flex size-4 shrink-0 items-center justify-center rounded-[1px] border border-[#c9c9c9] bg-white text-[8.500px] leading-none font-bold text-[#666]">{kind}</span>;
}

function Shelf({ label, field, active, required }: { label: string; field?: string; active?: boolean; required?: boolean }) {
  return (
    <div className="shrink-0">
      <div className="flex h-6 justify-between pt-[5px] pr-1.5 leading-5 text-[#616161]">
        <span>
          {required && <span className="mr-[3px] font-bold text-[#f5901e]">*</span>}
          {label}
        </span>
        {active && (
          <svg viewBox="0 0 9 13" className="-mt-1 h-[13px] w-[9px]" fill="none" stroke="#a8a8a8" strokeWidth="1.500">
            <path d="M2.500 13V1M.500 3.500l2-2.500 2 2.500M6.500 0v12M4.500 9.500l2 2.500 2-2.500" />
          </svg>
        )}
      </div>
      <div className={active ? "h-[33px] rounded-[2px] border border-dashed border-[#a9a9a9] bg-white p-1 shadow-[0_0_4px_1px_rgba(60,150,210,0.6)]" : "h-[33px] rounded-[2px] border border-dashed border-[#b3b3b3] bg-white p-1"}>
        {field ? (
          <div className="flex h-[23px] items-center rounded-[2px] border border-[#cfdbe2] bg-[#e6f4fd] pl-[5px] text-[11.300px] text-[#2b2b2b]">
            <TypeBadge kind="#" />
            <span className="ml-[3px]">{field}</span>
            <span className="mr-[5px] ml-auto border-y-[3px] border-l-4 border-y-transparent border-l-[#2a84c6]" />
          </div>
        ) : (
          <div className="pl-1 leading-[22px] text-[#bdbdbd]">drag fields to add here</div>
        )}
      </div>
    </div>
  );
}

function VisualsPanel() {
  return (
    <aside className="flex h-full w-[215px] shrink-0 flex-col overflow-hidden border-l border-[#b9b9b9] bg-[#f9f9f9] text-[11.800px]">
      <div className="h-[35px] shrink-0 border-b border-[#cfcfcf] pl-[10px] text-[14px] leading-9 text-[#666]">VISUALS</div>
      <div className="flex h-[31px] shrink-0 items-center border-b border-[#dcdcdc] bg-white pl-[10px] text-[#666]">
        <svg viewBox="0 0 70 52" className="h-[17px] w-[23px]">
          <StackedBars />
        </svg>
        <span className="ml-[3px]">Bars</span>
        <TrendIcon className="ml-auto h-3.5 w-4 text-[#2a84c6]" />
        <svg viewBox="0 0 8 6" className="mr-[15px] ml-[10px] h-1.5 w-2" fill="none" stroke="#666" strokeWidth="1.200">
          <path d="M1 1l3 3 3-3" />
        </svg>
      </div>
      <div className="h-[185px] shrink-0 border-b border-[#dcdcdc] bg-white">
        <VisualTypes />
      </div>
      <div className="flex shrink-0 flex-col pt-[9px] pr-4 pl-[15px]">
        <Shelf label="X Axis" field="sum(laptop_id)" required />
        <Shelf label="Y Axis" field="sum(anomaly)" active required />
        <Shelf label="Colors" />
        <Shelf label="Tooltips" />
        <Shelf label="Drill" />
        <Shelf label="Labels" />
        <div className="mt-[7px] flex h-5 items-center text-[#616161]">
          <span className="flex h-5 w-[22px] items-center justify-center rounded-[1px] border border-[#a9cbe2]">
            <FaDownload className="size-2.5 text-[#b5b5b5]" />
          </span>
          <span className="ml-1">Filters</span>
        </div>
        <div className="mt-0.5 h-[33px] rounded-[2px] border border-dashed border-[#b3b3b3] bg-white" />
      </div>
    </aside>
  );
}

/* ---------- data panel ---------- */

function GroupHeader({ title, count }: { title: string; count: number }) {
  return (
    <div className="flex h-[26px] items-center justify-between bg-[#98a0a5] pr-[3px] pl-[3px] text-[14px] font-medium text-white">
      {title}
      <span className="flex h-[18px] w-[21px] items-center justify-center rounded-full bg-[#c6c8c9] text-[11px] font-bold">{count}</span>
    </div>
  );
}

function Source() {
  return (
    <div className="mt-1 mr-px flex h-[21px] items-center bg-[#ccd1d4] pl-[3px] text-[12px] text-[#5b5b5b]">
      <span className="mr-[3px] border-x-[3.500px] border-t-4 border-x-transparent border-t-[#4f4f4f]" />
      user001_laptop_data_scored
    </div>
  );
}

function Field({ kind, name, tall }: { kind: string; name: string; tall?: boolean }) {
  return (
    <div className={tall ? "mt-0.5 mr-px flex h-[22px] items-center rounded-[2px] border border-[#dfdfdf] bg-[#efefef] pl-[3px] text-[#2f2f2f]" : "mt-0.5 mr-px flex h-[21px] items-center rounded-[2px] border border-[#dfdfdf] bg-[#efefef] pl-[3px] text-[#2f2f2f]"}>
      <TypeBadge kind={kind} />
      <span className="ml-[3px]">{name}</span>
    </div>
  );
}

function DataPanel() {
  return (
    <aside className="flex h-full w-[215px] shrink-0 flex-col border-l border-[#d3d3d3] bg-[#f9f9f9] text-[11.500px]">
      <div className="flex h-[35px] items-center border-b border-[#cfcfcf] pr-[11px] pl-[10px] text-[14px] text-[#666]">
        DATA
        <ExpandIcon className="ml-auto size-3 text-[#dadada]" />
        <FaTimes className="ml-[10px] size-2.5 text-[#cfcfcf]" />
      </div>
      <div className="pr-[15px] pl-[14px]">
        <div className="flex h-9 items-center text-[12px] text-[#333]">
          <FaCubes className="size-[15px] text-[#999]" />
          <span className="ml-[3px]">user001-data</span>
          <FaPencilAlt className="ml-auto size-[11px] text-[#2a84c6]" />
          <FaRandom className="ml-1 size-3.5 text-[#2a84c6]" />
        </div>
        <div className="mt-2 flex h-5 text-[12px] text-[#333]">
          <span className="leading-[18px]">Sample Mode:</span>
          <span className="ml-[3px] h-5 w-8 rounded-[1px] border border-[#2a84c6] bg-white text-center leading-[18px]">OFF</span>
        </div>
        <div className="mt-[10px] flex h-6 items-center rounded-[2px] border border-[#c9d1d9] bg-white px-[5px] text-[12px] text-[#555]">
          <FaSearch className="size-[11px] text-[#999]" />
          <span className="ml-1.5">Search</span>
          <FaTimesCircle className="ml-auto size-[14px] text-[#4f4f4f]" />
        </div>
        <div className="mt-[11px]">
          <GroupHeader title="Dimensions" count={1} />
          <Source />
          <Field kind="A" name="event_ts" />
        </div>
        <div className="mt-[37px]">
          <GroupHeader title="Measures" count={6} />
          <Source />
          <Field kind="#" name="Record Count" tall />
          <Field kind="#" name="laptop_id" tall />
          <Field kind="1.2" name="latitude" />
          <Field kind="1.2" name="longitude" />
          <Field kind="1.2" name="temperature" />
          <Field kind="#" name="anomaly" />
        </div>
      </div>
    </aside>
  );
}

/* ---------- side rail ---------- */

function RailItem({ icon, label, active }: { icon: React.ReactNode; label: string; active?: boolean }) {
  return (
    <div className={active ? "relative flex h-[54px] flex-col items-center bg-[#757c80] pt-[9px] font-medium text-white" : "flex h-[55px] flex-col items-center pt-[10px] text-[#333]"}>
      {active && <span className="absolute top-[20px] -left-[9px] border-y-[9px] border-r-[9px] border-y-transparent border-r-[#757c80]" />}
      <span className="flex h-4 items-center">{icon}</span>
      <span className="leading-[19px]">{label}</span>
    </div>
  );
}

function Rail() {
  return (
    <nav className="flex h-full w-[55px] shrink-0 flex-col border-l border-[#b5b5b5] bg-[#eeeeee] text-[11.500px]">
      <div className="h-[25px] border-y border-[#bdbdbd] bg-[#e6e6e6] text-center leading-[23px] text-[#777]">DASH.</div>
      <RailItem
        icon={
          <>
            <FaPlus className="mt-1 size-2" />
            <svg viewBox="0 0 14 13" className="ml-0.5 h-[13px] w-3.5" fill="currentColor">
              <path d="M0 3h3.600v10H0zM5 0h3.600v13H5zM10 8h3.600v5H10z" />
            </svg>
          </>
        }
        label="Visuals"
      />
      <RailItem
        icon={
          <>
            <FaPlus className="size-2" />
            <FaFilter className="ml-[3px] size-[11px]" />
          </>
        }
        label="Filters"
      />
      <RailItem icon={<FaCogs className="size-4" />} label="Settings" />
      <RailItem icon={<FaRegGem className="size-[15px]" />} label="Style" />
      <div className="mt-[10px] mb-px h-[25px] border-y border-[#bdbdbd] bg-[#e6e6e6] text-center leading-[23px] text-[#777]">VISUAL</div>
      <RailItem icon={<FaCubes className="size-[17px]" />} label="Build" active />
      <RailItem icon={<FaCogs className="size-4" />} label="Settings" />
      <RailItem icon={<FaRegGem className="size-[15px]" />} label="Style" />
    </nav>
  );
}

/* ---------- neighbouring window at the desktop edge ---------- */

function Neighbour() {
  return (
    <div className="flex h-[723px] w-[26px] shrink-0 flex-col bg-[#0a1a5e] pl-1">
      <div className="h-[607px] overflow-hidden rounded-bl-lg bg-[#c4c4c4]">
        <div className="flex h-[556px] flex-col overflow-hidden rounded-bl-lg border-b border-[#9a9a9a] bg-[#e8e8e8] shadow-[0_6px_14px_rgba(0,0,0,0.4)]">
          <div className="h-[18px] bg-[#14242b] pl-[18px]">
            <div className="h-2 w-1 border-b-2 border-l-2 border-[#d5d5d5]" />
          </div>
          <div className="h-[26px] border-b border-[#bdbdbd] bg-[#f1f1f1] pt-1 pl-5">
            <div className="h-[17px] w-1 border-y border-l border-[#2a84c6] bg-white" />
          </div>
          <div className="mt-2 ml-[11px] grow bg-white pt-[49px] pl-[7px] shadow-[0_0_3px_rgba(0,0,0,0.3)]">
            <div className="h-7 w-2 border border-r-0 border-dashed border-[#c4c4c4]" />
          </div>
        </div>
      </div>
    </div>
  );
}

export default function App() {
  return (
    <div className="relative flex h-[723px] w-[1946px] overflow-hidden bg-[#f1f1f1] font-[Roboto,sans-serif]">
      <div className="flex w-[1910px] shrink-0 flex-col">
        <Header />
        <div className="flex min-h-0 grow">
          <div className="flex w-[1425px] shrink-0 flex-col">
            <Toolbar />
            <Canvas />
          </div>
          <div className="relative flex w-[430px] shrink-0 flex-col bg-[#f1f1f1] pt-[3px]">
            <div className="ml-[215px] flex h-[30px] shrink-0 items-center justify-center gap-1 bg-[#4db5c0] text-[14px] font-medium text-white">
              <LayoutIcon className="size-3" />
              Dashboard Designer
            </div>
            <div className="flex min-h-0 grow">
              <VisualsPanel />
              <DataPanel />
            </div>
          </div>
          <div className="relative w-[55px] shrink-0 bg-[#f1f1f1] pt-[31px]">
            <Rail />
          </div>
        </div>
      </div>
      <div className="w-[10px] shrink-0 border-l border-[#a9a9a9] bg-[#cbcbcb]" />
      <Neighbour />
      <Arrows />
    </div>
  );
}
